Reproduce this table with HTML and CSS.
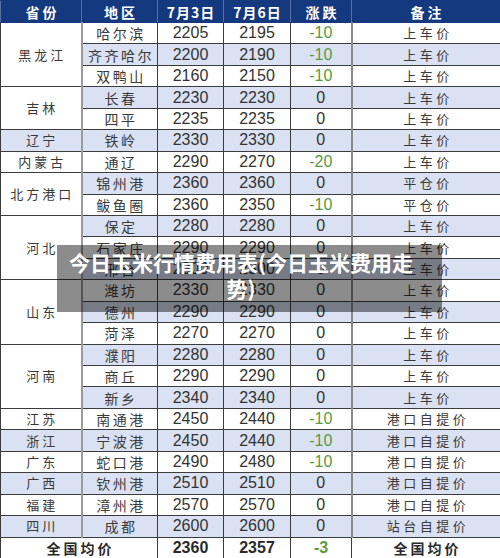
FILE: index.html
```html
<!DOCTYPE html>
<html lang="zh">
<head>
<meta charset="utf-8">
<link rel="stylesheet" href="styles.css">
</head>
<body>
<div class="wrap">
<table class="price">
<colgroup>
<col class="c1"><col class="c2"><col class="c3"><col class="c4"><col class="c5"><col class="c6">
</colgroup>
<thead>
<tr class="head"><th>省份</th><th>地区</th><th class="num">7月3日</th><th class="num">7月6日</th><th>涨跌</th><th>备注</th></tr>
</thead>
<tbody>
<tr><td class="prov" rowspan="3">黑龙江</td><td class="city">哈尔滨</td><td class="n">2205</td><td class="n">2195</td><td class="n down">-10</td><td class="note">上车价</td></tr>
<tr class="alt"><td class="city">齐齐哈尔</td><td class="n">2200</td><td class="n">2190</td><td class="n down">-10</td><td class="note">上车价</td></tr>
<tr><td class="city">双鸭山</td><td class="n">2160</td><td class="n">2150</td><td class="n down">-10</td><td class="note">上车价</td></tr>
<tr class="alt"><td class="prov" rowspan="2">吉林</td><td class="city">长春</td><td class="n">2230</td><td class="n">2230</td><td class="n">0</td><td class="note">上车价</td></tr>
<tr><td class="city">四平</td><td class="n">2235</td><td class="n">2235</td><td class="n">0</td><td class="note">上车价</td></tr>
<tr class="alt"><td class="prov">辽宁</td><td class="city">铁岭</td><td class="n">2330</td><td class="n">2330</td><td class="n">0</td><td class="note">上车价</td></tr>
<tr><td class="prov">内蒙古</td><td class="city">通辽</td><td class="n">2290</td><td class="n">2270</td><td class="n down">-20</td><td class="note">上车价</td></tr>
<tr class="alt"><td class="prov" rowspan="2">北方港口</td><td class="city">锦州港</td><td class="n">2360</td><td class="n">2360</td><td class="n">0</td><td class="note">平仓价</td></tr>
<tr><td class="city">鲅鱼圈</td><td class="n">2360</td><td class="n">2350</td><td class="n down">-10</td><td class="note">平仓价</td></tr>
<tr class="alt"><td class="prov" rowspan="3">河北</td><td class="city">保定</td><td class="n">2280</td><td class="n">2280</td><td class="n">0</td><td class="note">上车价</td></tr>
<tr><td class="city">石家庄</td><td class="n">2290</td><td class="n">2290</td><td class="n">0</td><td class="note">上车价</td></tr>
<tr class="alt"><td class="city">邢台</td><td class="n">2300</td><td class="n">2300</td><td class="n">0</td><td class="note">上车价</td></tr>
<tr><td class="prov" rowspan="3">山东</td><td class="city">潍坊</td><td class="n">2330</td><td class="n">2330</td><td class="n">0</td><td class="note">上车价</td></tr>
<tr class="alt"><td class="city">德州</td><td class="n">2290</td><td class="n">2290</td><td class="n">0</td><td class="note">上车价</td></tr>
<tr><td class="city">菏泽</td><td class="n">2270</td><td class="n">2270</td><td class="n">0</td><td class="note">上车价</td></tr>
<tr class="alt"><td class="prov" rowspan="3">河南</td><td class="city">濮阳</td><td class="n">2280</td><td class="n">2280</td><td class="n">0</td><td class="note">上车价</td></tr>
<tr><td class="city">商丘</td><td class="n">2290</td><td class="n">2290</td><td class="n">0</td><td class="note">上车价</td></tr>
<tr class="alt"><td class="city">新乡</td><td class="n">2340</td><td class="n">2340</td><td class="n">0</td><td class="note">上车价</td></tr>
<tr><td class="prov">江苏</td><td class="city">南通港</td><td class="n">2450</td><td class="n">2440</td><td class="n down">-10</td><td class="note">港口自提价</td></tr>
<tr class="alt"><td class="prov">浙江</td><td class="city">宁波港</td><td class="n">2450</td><td class="n">2440</td><td class="n down">-10</td><td class="note">港口自提价</td></tr>
<tr><td class="prov">广东</td><td class="city">蛇口港</td><td class="n">2490</td><td class="n">2480</td><td class="n down">-10</td><td class="note">港口自提价</td></tr>
<tr class="alt"><td class="prov">广西</td><td class="city">钦州港</td><td class="n">2510</td><td class="n">2510</td><td class="n">0</td><td class="note">港口自提价</td></tr>
<tr><td class="prov">福建</td><td class="city">漳州港</td><td class="n">2570</td><td class="n">2570</td><td class="n">0</td><td class="note">港口自提价</td></tr>
<tr class="alt"><td class="prov">四川</td><td class="city">成都</td><td class="n">2600</td><td class="n">2600</td><td class="n">0</td><td class="note">站台自提价</td></tr>
<tr class="total"><td class="tlabel" colspan="2">全国均价</td><td class="n">2360</td><td class="n">2357</td><td class="n down">-3</td><td class="tlabel">全国均价</td></tr>
</tbody>
</table>
<div class="caption">今日玉米行情费用表(今日玉米费用走势)</div>
</div>
</body>
</html>
```

FILE: styles.css
```css
html, body {
  margin: 0;
  padding: 0;
  background: #ffffff;
}
.wrap {
  position: relative;
  width: 500px;
  height: 558px;
  overflow: hidden;
}
.price {
  width: 500px;
  border-collapse: collapse;
  table-layout: fixed;
  font-family: "Noto Sans CJK SC", sans-serif;
  color: #3a3a3a;
}
.c1 { width: 81px; }
.c2 { width: 76px; }
.c3 { width: 66px; }
.c4 { width: 67px; }
.c5 { width: 61px; }
.c6 { width: 149px; }

.price th, .price td {
  padding: 0;
  text-align: center;
  vertical-align: middle;
  border: 1px solid #3c3c3c;
  overflow: hidden;
  white-space: nowrap;
  line-height: 18px;
}
.head th {
  height: 21px;
  background: #14397f;
  color: #ffffff;
  font-weight: 700;
  font-size: 14px;
  letter-spacing: 3px;
  padding-left: 3px;
  border-color: #14397f #5a6f9a;
}
.head th.num {
  letter-spacing: 1px;
  padding-left: 1px;
}
.price tbody tr { height: 21.44px; }
.price tbody tr.alt td { background: #d9e1f2; }
.price td.prov {
  background: #ffffff;
  font-size: 13px;
  letter-spacing: 3px;
  padding-left: 3px;
  border-right: 2px solid #9a9a9a;
}
.price tbody tr.alt td.prov[rowspan] { background: #ffffff; }
.price td.city {
  font-size: 14px;
  letter-spacing: 2.5px;
  padding-left: 2.5px;
}
.price td.n {
  font-family: "Liberation Sans", Arial, sans-serif;
  font-size: 16px;
  color: #333333;
}
.price td.n.down { color: #5a9a3c; }
.price td.note {
  font-size: 13px;
  letter-spacing: 3.5px;
  padding-left: 3.5px;
  border-left: 2px solid #8a8a8a;
}
.total td { background: #ffffff; font-weight: 700; }
.total td.n { color: #2a2a2a; }
.total td.tlabel {
  font-size: 14px;
  letter-spacing: 3px;
  padding-left: 3px;
  color: #2a2a2a;
}

.caption {
  position: absolute;
  left: 57px;
  top: 245px;
  width: 352px;
  padding: 4px 25px 11px 8px;
  background: rgba(0, 0, 0, 0.45);
  color: #ffffff;
  font-family: "Noto Sans CJK SC", sans-serif;
  font-weight: 700;
  font-size: 21px;
  line-height: 26px;
  text-align: center;
}
```
